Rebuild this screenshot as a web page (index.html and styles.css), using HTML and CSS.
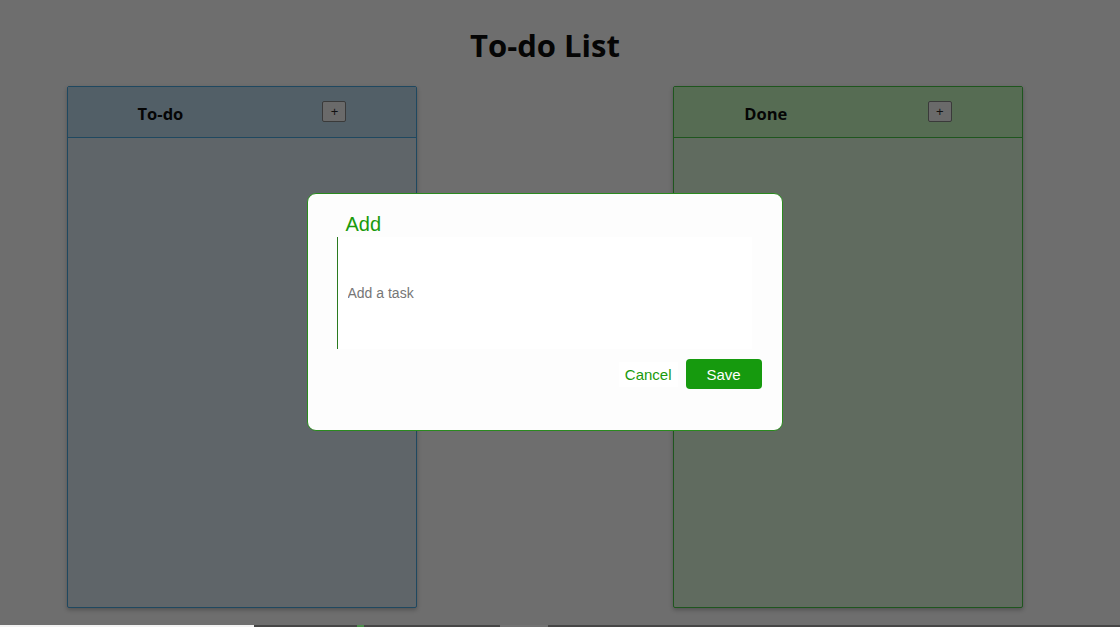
FILE: index.html
```html
<!DOCTYPE html>
<html lang="en">
<head>
<meta charset="utf-8">
<title>To-do List</title>
<link rel="stylesheet" href="styles.css">
</head>
<body>
<div class="page">
  <h1 class="title">To-do List</h1>
  <div class="board">
    <section class="column column-todo">
      <header class="column-head">
        <span class="column-name">To-do</span>
        <button class="add-btn" type="button">+</button>
      </header>
      <div class="column-body"></div>
    </section>
    <section class="column column-done">
      <header class="column-head">
        <span class="column-name">Done</span>
        <button class="add-btn" type="button">+</button>
      </header>
      <div class="column-body"></div>
    </section>
  </div>
</div>
<div class="strip">
  <span class="seg seg-white"></span>
  <span class="seg seg-dark s1"></span>
  <span class="seg seg-green"></span>
  <span class="seg seg-dark s2"></span>
  <span class="seg seg-mid"></span>
  <span class="seg seg-dark s3"></span>
</div>
<div class="overlay">
  <div class="modal">
    <h2 class="modal-title">Add</h2>
    <input class="task-input" type="text" placeholder="Add a task">
    <div class="modal-actions">
      <button class="cancel-btn" type="button">Cancel</button>
      <button class="save-btn" type="button">Save</button>
    </div>
  </div>
</div>
</body>
</html>
```
FILE: styles.css
```css
html, body {
  margin: 0;
  padding: 0;
  background: #6e6e6e;
  overflow: hidden;
}
body {
  width: 1120px;
  height: 627px;
  font-family: "Open Sans", "Noto Sans", sans-serif;
}
.page {
  width: 1090px;
  height: 625px;
  display: flex;
  flex-direction: column;
}
.title {
  margin: 24px 0 0;
  height: 62px;
  text-align: center;
  font-size: 31px;
  font-weight: 700;
  line-height: 42px;
  color: #050505;
}
.board {
  display: flex;
  justify-content: space-between;
  padding: 0 67px;
}
.column {
  width: 348px;
  height: 520px;
  border: 1px solid;
  border-radius: 2px;
  display: flex;
  flex-direction: column;
  box-shadow: 0 2px 4px rgba(0,0,0,0.25);
}
.column-todo {
  border-color: #1f4860;
  background: #5f6569;
}
.column-todo .column-head {
  background: #525f67;
  border-bottom: 1px solid #1f4860;
}
.column-done {
  border-color: #1e561e;
  background: #606b5f;
}
.column-done .column-head {
  background: #566c53;
  border-bottom: 1px solid #1e561e;
}
.column-head {
  height: 50px;
  display: flex;
  align-items: center;
  justify-content: space-around;
}
.column-name {
  font-size: 16.5px;
  font-weight: 700;
  color: #050505;
  margin-top: 2px;
}
.add-btn {
  width: 24px;
  height: 21px;
  margin-top: -2px;
  padding: 0;
  border: 1px solid #3a3a3a;
  border-radius: 2px;
  background: #6a6a6a;
  color: #111;
  font-family: "Liberation Sans", Arial, sans-serif;
  font-size: 13px;
  line-height: 17px;
}
.column-body {
  flex: 1;
}
.strip {
  display: flex;
  height: 2px;
}
.seg { display: block; height: 2px; }
.seg-white { width: 254px; background: #f2f2f2; }
.seg-dark { background: #464646; }
.s1 { width: 103px; }
.seg-green { width: 7px; background: #4b8d4b; }
.s2 { width: 136px; }
.seg-mid { width: 48px; background: #727272; }
.s3 { flex: 1; }
.overlay {
  position: fixed;
  left: 0;
  top: 0;
  width: 1089px;
  height: 627px;
  display: flex;
  align-items: center;
  justify-content: center;
}
.modal {
  width: 433px;
  height: 218px;
  padding: 18px 20px 0 21px;
  background: #fdfdfd;
  border: 1px solid #2a8a1e;
  border-radius: 9px;
  font-family: "Liberation Sans", Arial, sans-serif;
  margin-top: -3px;
}
.modal-title {
  margin: 0 0 0 17px;
  font-size: 20px;
  font-weight: 400;
  line-height: 25px;
  color: #1a9a0c;
}
.task-input {
  display: block;
  box-sizing: border-box;
  margin-left: 8px;
  width: 415px;
  height: 112px;
  padding: 0 10px;
  border: none;
  border-left: 1px solid #2a7a20;
  background: #ffffff;
  font-family: "Liberation Sans", Arial, sans-serif;
  font-size: 14px;
  outline: none;
}
.task-input::placeholder {
  color: #767676;
}
.modal-actions {
  display: flex;
  justify-content: flex-end;
  align-items: center;
  gap: 8px;
  margin-top: 10px;
}
.cancel-btn {
  border: none;
  background: #ffffff;
  color: #1a9a0c;
  font-family: "Liberation Sans", Arial, sans-serif;
  font-size: 15px;
  padding: 4px 6px;
}
.save-btn {
  width: 76px;
  height: 30px;
  border: none;
  border-radius: 4px;
  background: #169a0e;
  color: #ffffff;
  font-family: "Liberation Sans", Arial, sans-serif;
  font-size: 15px;
  padding: 0;
}
```
